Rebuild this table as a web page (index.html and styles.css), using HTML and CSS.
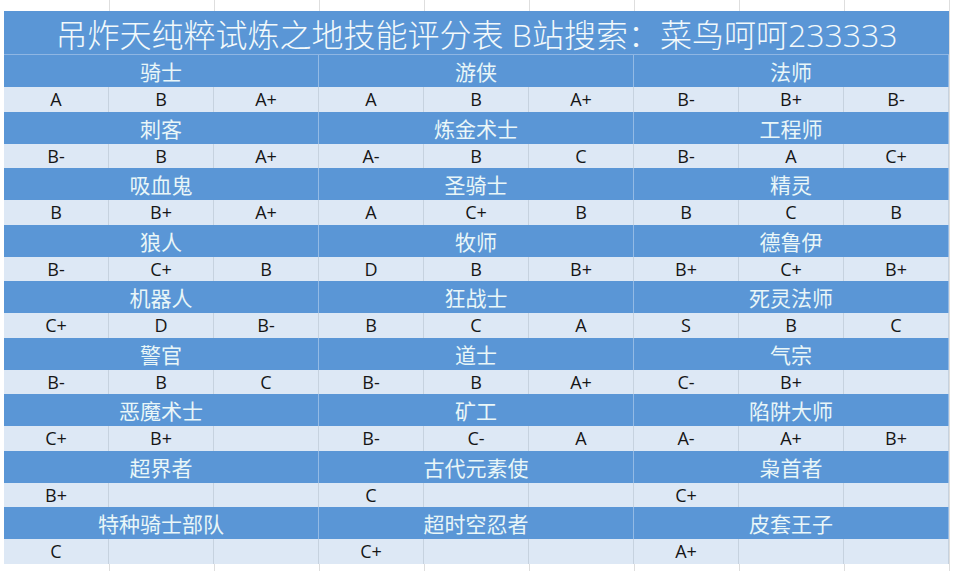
FILE: index.html
```html
<!DOCTYPE html>
<html lang="zh-CN">
<head>
<meta charset="utf-8">
<title>技能评分表</title>
<link rel="stylesheet" href="styles.css">
</head>
<body>
<div class="sheet">
  <div class="title">吊炸天纯粹试炼之地技能评分表 B站搜索：菜鸟呵呵233333</div>

  <div class="hdr">骑士</div><div class="hdr">游侠</div><div class="hdr">法师</div>
  <div class="cell">A</div><div class="cell">B</div><div class="cell">A+</div>
  <div class="cell">A</div><div class="cell">B</div><div class="cell">A+</div>
  <div class="cell">B-</div><div class="cell">B+</div><div class="cell">B-</div>

  <div class="hdr">刺客</div><div class="hdr">炼金术士</div><div class="hdr">工程师</div>
  <div class="cell">B-</div><div class="cell">B</div><div class="cell">A+</div>
  <div class="cell">A-</div><div class="cell">B</div><div class="cell">C</div>
  <div class="cell">B-</div><div class="cell">A</div><div class="cell">C+</div>

  <div class="hdr">吸血鬼</div><div class="hdr">圣骑士</div><div class="hdr">精灵</div>
  <div class="cell">B</div><div class="cell">B+</div><div class="cell">A+</div>
  <div class="cell">A</div><div class="cell">C+</div><div class="cell">B</div>
  <div class="cell">B</div><div class="cell">C</div><div class="cell">B</div>

  <div class="hdr">狼人</div><div class="hdr">牧师</div><div class="hdr">德鲁伊</div>
  <div class="cell">B-</div><div class="cell">C+</div><div class="cell">B</div>
  <div class="cell">D</div><div class="cell">B</div><div class="cell">B+</div>
  <div class="cell">B+</div><div class="cell">C+</div><div class="cell">B+</div>

  <div class="hdr">机器人</div><div class="hdr">狂战士</div><div class="hdr">死灵法师</div>
  <div class="cell">C+</div><div class="cell">D</div><div class="cell">B-</div>
  <div class="cell">B</div><div class="cell">C</div><div class="cell">A</div>
  <div class="cell">S</div><div class="cell">B</div><div class="cell">C</div>

  <div class="hdr">警官</div><div class="hdr">道士</div><div class="hdr">气宗</div>
  <div class="cell">B-</div><div class="cell">B</div><div class="cell">C</div>
  <div class="cell">B-</div><div class="cell">B</div><div class="cell">A+</div>
  <div class="cell">C-</div><div class="cell">B+</div><div class="cell"></div>

  <div class="hdr">恶魔术士</div><div class="hdr">矿工</div><div class="hdr">陷阱大师</div>
  <div class="cell">C+</div><div class="cell">B+</div><div class="cell"></div>
  <div class="cell">B-</div><div class="cell">C-</div><div class="cell">A</div>
  <div class="cell">A-</div><div class="cell">A+</div><div class="cell">B+</div>

  <div class="hdr">超界者</div><div class="hdr">古代元素使</div><div class="hdr">枭首者</div>
  <div class="cell">B+</div><div class="cell"></div><div class="cell"></div>
  <div class="cell">C</div><div class="cell"></div><div class="cell"></div>
  <div class="cell">C+</div><div class="cell"></div><div class="cell"></div>

  <div class="hdr">特种骑士部队</div><div class="hdr">超时空忍者</div><div class="hdr">皮套王子</div>
  <div class="cell">C</div><div class="cell"></div><div class="cell"></div>
  <div class="cell">C+</div><div class="cell"></div><div class="cell"></div>
  <div class="cell">A+</div><div class="cell"></div><div class="cell"></div>
</div>
</body>
</html>
```
FILE: styles.css
```css
html, body {
  margin: 0;
  padding: 0;
}

body {
  width: 954px;
  height: 571px;
  overflow: hidden;
  background-color: #ffffff;
  background-image: repeating-linear-gradient(to right, transparent 0 104px, #dedede 104px 105px);
  background-position: 5px 0;
  font-family: "Open Sans", "Noto Sans CJK SC", sans-serif;
  padding: 11px 0 0 4px;
  box-sizing: border-box;
}

.sheet {
  display: grid;
  grid-template-columns: repeat(9, 105px);
  width: 945px;
  background: #ffffff;
}

.title {
  grid-column: 1 / -1;
  height: 44px;
  background: #5a96d6;
  color: #f2f9fb;
  font-size: 32px;
  font-weight: 300;
  display: flex;
  align-items: center;
  justify-content: center;
  border-bottom: 1px solid #8fb6e3;
  box-sizing: border-box;
}

.hdr {
  grid-column: span 3;
  height: 32px;
  background: #5a96d6;
  color: #e9f6f8;
  font-size: 21px;
  font-weight: 400;
  display: flex;
  align-items: center;
  justify-content: center;
  border-right: 1px solid #93bae5;
  box-sizing: border-box;
}

.cell {
  height: 24.5px;
  background: #dde8f5;
  color: #161616;
  font-size: 18px;
  display: flex;
  align-items: center;
  justify-content: center;
  border-right: 1px solid #c6d2df;
  box-sizing: border-box;
  line-height: 1;
}
```
